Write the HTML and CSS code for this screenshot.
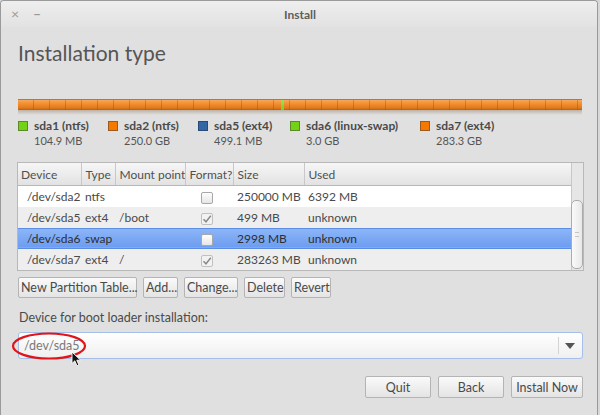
FILE: index.html
```html
<!DOCTYPE html>
<html lang="en">
<head>
    <meta charset="UTF-8">
    <title>Install</title>
    <link rel="stylesheet" href="styles.css">
</head>
<body>
    <div class="window">
        <div class="titlebar">
            <span class="tb-close">&#215;</span>
            <span class="tb-min">&#8211;</span>
            <span class="tb-title">Install</span>
        </div>

        <div class="content">
            <h1>Installation type</h1>

            <div class="pbar">
                <div class="pbar-fill"><span class="swap-seg"></span></div>
                <div class="pbar-shadow"></div>
            </div>

            <div class="legend">
                <div class="leg leg1"><span class="sw green"></span><div><b>sda1 (ntfs)</b><small>104.9 MB</small></div></div>
                <div class="leg leg2"><span class="sw orange"></span><div><b>sda2 (ntfs)</b><small>250.0 GB</small></div></div>
                <div class="leg leg3"><span class="sw blue"></span><div><b>sda5 (ext4)</b><small>499.1 MB</small></div></div>
                <div class="leg leg4"><span class="sw green"></span><div><b>sda6 (linux-swap)</b><small>3.0 GB</small></div></div>
                <div class="leg leg5"><span class="sw orange"></span><div><b>sda7 (ext4)</b><small>283.3 GB</small></div></div>
            </div>

            <div class="table-box">
                <table class="parts">
                    <colgroup>
                        <col class="w-dev"><col class="w-type"><col class="w-mnt"><col class="w-fmt"><col class="w-size"><col class="w-used">
                    </colgroup>
                    <thead>
                        <tr>
                            <th class="c-dev">Device</th>
                            <th>Type</th>
                            <th>Mount point</th>
                            <th>Format?</th>
                            <th>Size</th>
                            <th class="c-used">Used</th>
                        </tr>
                    </thead>
                    <tbody>
                        <tr>
                            <td class="c-dev">/dev/sda2</td><td>ntfs</td><td></td>
                            <td class="c-fmt"><span class="cb"></span></td>
                            <td>250000 MB</td><td>6392 MB</td>
                        </tr>
                        <tr class="alt">
                            <td class="c-dev">/dev/sda5</td><td>ext4</td><td>/boot</td>
                            <td class="c-fmt"><span class="cb on"><svg viewBox="0 0 10 10" width="10" height="10"><path d="M1.5 5.2 L4 7.8 L8.8 1.8" fill="none" stroke="#8a8a8a" stroke-width="1.5"/></svg></span></td>
                            <td>499 MB</td><td>unknown</td>
                        </tr>
                        <tr class="sel">
                            <td class="c-dev">/dev/sda6</td><td>swap</td><td></td>
                            <td class="c-fmt"><span class="cb"></span></td>
                            <td>2998 MB</td><td>unknown</td>
                        </tr>
                        <tr class="alt">
                            <td class="c-dev">/dev/sda7</td><td>ext4</td><td>/</td>
                            <td class="c-fmt"><span class="cb on"><svg viewBox="0 0 10 10" width="10" height="10"><path d="M1.5 5.2 L4 7.8 L8.8 1.8" fill="none" stroke="#8a8a8a" stroke-width="1.5"/></svg></span></td>
                            <td>283263 MB</td><td>unknown</td>
                        </tr>
                    </tbody>
                </table>
                <div class="scroll">
                    <div class="thumb"><span class="grip"></span></div>
                </div>
            </div>

            <div class="actions">
                <button class="btn b-new">New Partition Table...</button>
                <button class="btn b-add">Add...</button>
                <button class="btn b-chg">Change...</button>
                <button class="btn b-del">Delete</button>
                <button class="btn b-rev">Revert</button>
            </div>

            <div class="boot-label">Device for boot loader installation:</div>

            <div class="combo">
                <span class="combo-text">/dev/sda5</span>
                <span class="combo-arrow"></span>
            </div>

            <div class="footer">
                <button class="btn f-btn">Quit</button>
                <button class="btn f-btn">Back</button>
                <button class="btn f-btn f-install">Install Now</button>
            </div>

            <svg class="mark" width="80" height="32" viewBox="0 0 80 32">
                <ellipse cx="38" cy="15" rx="36" ry="12.5" fill="none" stroke="#e0141a" stroke-width="2.2"/>
            </svg>
            <svg class="cursor" width="12" height="16" viewBox="0 0 12 16">
                <path d="M1 1 L1 12.5 L3.8 9.8 L6 14.8 L7.9 14 L5.8 9.2 L9.6 9.2 Z" fill="#111" stroke="#fff" stroke-width="0.9"/>
            </svg>
        </div>
    </div>
</body>
</html>
```

FILE: styles.css
```css
body {
    margin: 0;
    background: #d8d8d8;
    font-family: Lato, "DejaVu Sans", sans-serif;
    color: #4a4a4a;
}
.window {
    width: 596px;
    height: 414px;
    border: 1px solid #9a9a9a;
    border-bottom: none;
    border-radius: 4px 4px 0 0;
    background: #e0e0e0;
    overflow: hidden;
}
.titlebar {
    position: relative;
    height: 26px;
    background: linear-gradient(#eeeeee, #e2e2e2);
    font-size: 12px;
}
.tb-close, .tb-min {
    position: absolute;
    top: 4px;
    color: #9a9a9a;
    font-size: 14px;
}
.tb-close { left: 10px; }
.tb-min { left: 32px; font-weight: bold; }
.tb-title {
    display: block;
    text-align: center;
    line-height: 28px;
    font-weight: bold;
    color: #5e5e5e;
    padding-left: 2px;
}
.content {
    position: relative;
    padding: 13px 13px 0 16px;
}
h1 {
    margin: 0 0 0 1px;
    font-size: 21px;
    font-weight: normal;
    line-height: 26px;
    color: #555;
}

/* partition bar */
.pbar {
    margin: 33px 0 0 1px;
    width: 564px;
}
.pbar-fill {
    position: relative;
    height: 10px;
    background:
        repeating-linear-gradient(90deg, transparent 0 15px, rgba(150, 70, 0, 0.35) 15px 16px),
        linear-gradient(#f7a85a, #f08a2a 45%, #e07a1c 80%, #b85e12);
    border-top: 1px solid #c9732a;
}
.swap-seg {
    position: absolute;
    left: 263px;
    top: 0;
    width: 3px;
    height: 10px;
    background: linear-gradient(#9be350, #73d216);
}
.pbar-shadow {
    height: 5px;
    background: linear-gradient(rgba(120, 90, 60, 0.35), rgba(200, 200, 200, 0));
}

/* legend */
.legend {
    display: flex;
    margin-top: 3px;
    height: 40px;
}
.leg {
    display: flex;
    gap: 6px;
}
.leg1 { width: 90px; margin-left: 1px; }
.leg2 { width: 90px; }
.leg3 { width: 92px; }
.leg4 { width: 130px; }
.sw {
    width: 8px;
    height: 8px;
    margin-top: 3px;
    border: 1px solid #777;
}
.sw.green { background: #73d216; border-color: #5a8a2a; }
.sw.orange { background: #f57900; border-color: #9a5a20; }
.sw.blue { background: #3465a4; border-color: #2a4a78; }
.leg b {
    display: block;
    font-size: 12px;
    font-weight: bold;
    color: #4a4a4a;
    line-height: 15px;
}
.leg small {
    display: block;
    font-size: 11px;
    color: #555;
    line-height: 15px;
}

/* table */
.table-box {
    display: flex;
    margin-top: 4px;
    width: 565px;
    height: 107px;
    border: 1px solid #b8b8b8;
    background: #fff;
    overflow: hidden;
}
.parts {
    flex: none;
    width: 553px;
    table-layout: fixed;
    border-collapse: collapse;
    font-size: 12px;
    color: #4a4a4a;
}
.w-dev { width: 63px; }
.w-type { width: 34px; }
.w-mnt { width: 70px; }
.w-fmt { width: 48px; }
.w-size { width: 71px; }
.w-used { width: 267px; }
.parts th {
    height: 22px;
    padding: 0 0 0 4px;
    text-align: left;
    font-weight: normal;
    white-space: nowrap;
    overflow: hidden;
    background: linear-gradient(#f6f6f6, #e2e2e2);
    border-right: 1px solid #c8c8c8;
    border-bottom: 1px solid #b8b8b8;
    color: #505050;
}
.parts th.c-used { border-right: none; }
.parts td {
    height: 20px;
    padding: 0 0 0 4px;
    white-space: nowrap;
    overflow: hidden;
}
th.c-dev { padding-left: 3px; }
td.c-dev { padding-left: 9px; }
.c-fmt { text-align: center; }
.parts td.c-fmt { padding: 0 4px 0 0; }
.parts tr.alt td { background: #eeeeee; }
.parts tr.sel td {
    height: 19px;
    background: linear-gradient(#8db6f8, #6c9cf0);
    border-top: 1px solid #5b8ee2;
    border-bottom: 1px solid #5b8ee2;
    color: #2e2e2e;
}
.cb {
    display: inline-block;
    width: 10px;
    height: 10px;
    border: 1px solid #a8a8a8;
    border-radius: 2px;
    background: linear-gradient(#fdfdfd, #e6e6e6);
    vertical-align: middle;
}
.cb.on { border-color: #c0c0c0; background: #f2f2f2; }
.cb svg { display: block; }
.scroll {
    width: 11px;
    background: #e6e6e6;
    border-left: 1px solid #c8c8c8;
    display: flex;
    flex-direction: column;
    justify-content: flex-end;
    padding: 0 0 1px 0;
}
.thumb {
    height: 67px;
    margin: 0 0 0 -1px;
    border: 1px solid #ababab;
    border-radius: 5px;
    background: linear-gradient(90deg, #fafafa, #e8e8e8);
    display: flex;
    align-items: center;
    justify-content: center;
}
.grip {
    width: 4px;
    height: 3px;
    border-top: 1px solid #c4c4c4;
    border-bottom: 1px solid #c4c4c4;
}

/* buttons */
.btn {
    font-family: Lato, "DejaVu Sans", sans-serif;
    font-size: 12.5px;
    color: #4a4a4a;
    height: 21px;
    padding: 0 2px;
    white-space: nowrap;
    border: 1px solid #b4b4b4;
    border-radius: 2px;
    background: linear-gradient(#fafafa, #e4e4e4);
}
.actions {
    display: flex;
    gap: 6px;
    margin: 6px 0 0 1px;
}
.b-new { width: 119px; }
.b-add { width: 35px; }
.b-chg { width: 54px; }
.b-del { width: 41px; }
.b-rev { width: 40px; }
.boot-label {
    margin: 12px 0 0 2px;
    font-size: 12.5px;
    line-height: 16px;
    color: #4a4a4a;
}
.combo {
    display: flex;
    align-items: center;
    margin: 6px 0 0 1px;
    width: 563px;
    height: 25px;
    border: 1px solid #a4c0ea;
    border-radius: 3px;
    background: linear-gradient(#ffffff, #efefef);
}
.combo-text {
    flex: 1;
    padding-left: 5px;
    font-size: 12.5px;
    color: #7a7a7a;
}
.combo-arrow {
    width: 23px;
    height: 17px;
    border-left: 1px solid #d4d4d4;
    position: relative;
}
.combo-arrow::after {
    content: "";
    position: absolute;
    left: 6px;
    top: 6px;
    border-left: 5px solid transparent;
    border-right: 5px solid transparent;
    border-top: 6px solid #555;
}
.footer {
    display: flex;
    justify-content: flex-end;
    gap: 7px;
    margin: 17px 1px 0 0;
    width: 566px;
}
.f-btn { width: 66px; height: 22px; }
.f-install { width: 72px; }

/* annotation overlays */
.mark {
    position: absolute;
    left: 10px;
    top: 304px;
}
.cursor {
    position: absolute;
    left: 70px;
    top: 324px;
}
```
